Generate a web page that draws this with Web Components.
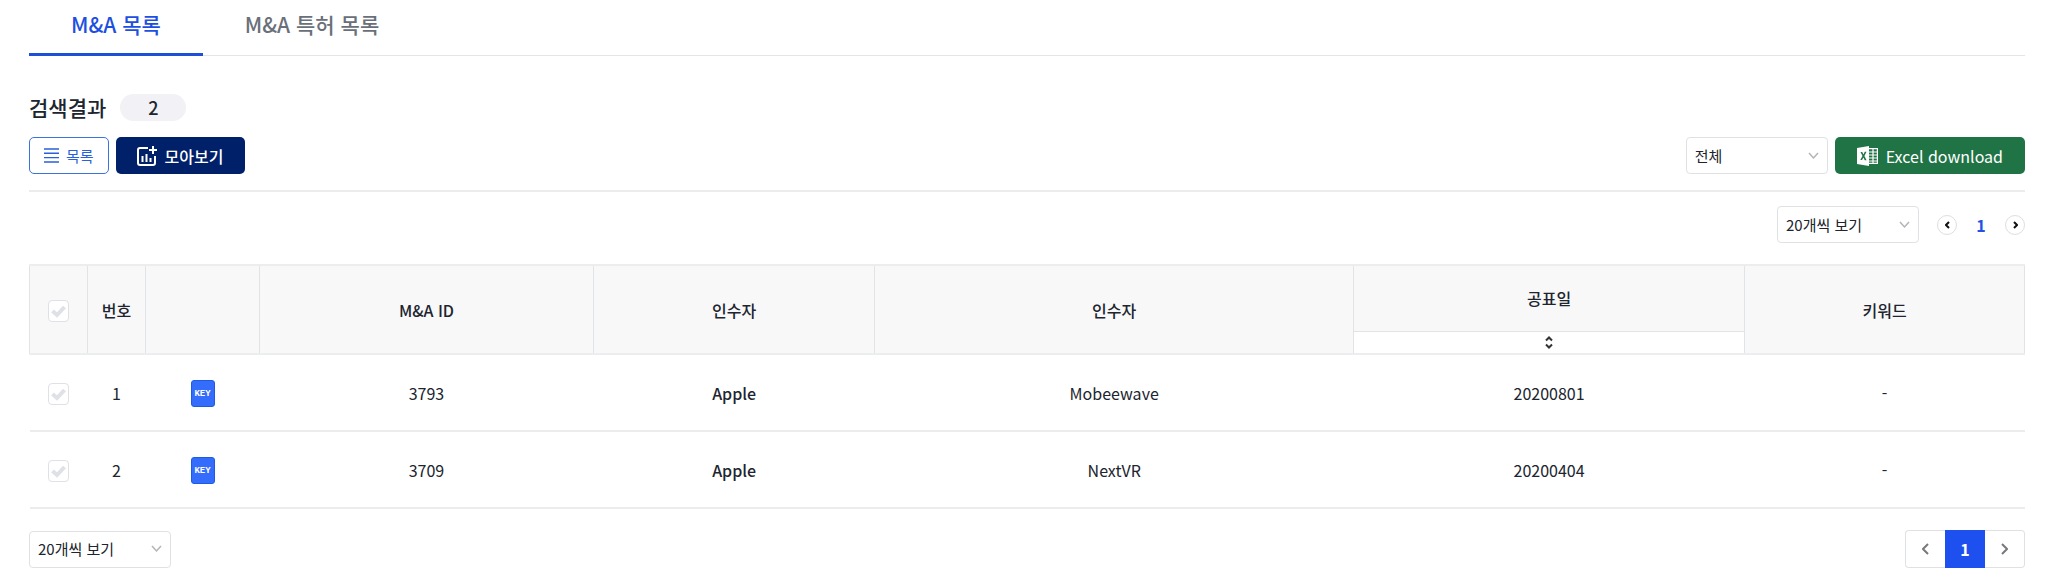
<!DOCTYPE html>
<html lang="ko">
<head>
<meta charset="utf-8">
<meta name="viewport" content="width=device-width, initial-scale=1">
<title>M&amp;A 목록</title>
<style>
  body { margin: 0; background: #fff; color: #20242e; font: 400 16px/24px "Noto Sans CJK KR", "Noto Sans", sans-serif; }
</style>
</head>
<body>
<ma-page>
  <ma-tabs>
    <ma-tab current>M&amp;A 목록</ma-tab>
    <ma-tab>M&amp;A 특허 목록</ma-tab>
  </ma-tabs>
  <result-count value="2">검색결과</result-count>
  <tool-bar>
    <tool-button kind="outline">
      <svg slot="icon" width="15" height="15" viewBox="0 0 15 15" stroke="currentColor" stroke-width="1.400"><path d="M0 1h15M0 5.300h15M0 9.600h15M0 14h15"/></svg>
      목록
    </tool-button>
    <tool-button kind="navy">
      <svg slot="icon" width="20" height="20" viewBox="0 0 20 20" fill="none" stroke="currentColor" stroke-width="2"><path d="M11 2H3Q1 2 1 4v13q0 2 2 2h13q2 0 2-2V10"/><path d="M16 0v8M12 4h8M5.500 10v6M9.500 8v8M13.500 12v4"/></svg>
      모아보기
    </tool-button>
    <drop-down slot="end" name="분류" options="전체"></drop-down>
    <tool-button slot="end" kind="green">
      <svg slot="icon" width="21" height="20" viewBox="0 0 21 20"><path fill="#fff" fill-rule="evenodd" d="M0 2 12 0v20L0 18zM3.500 6l2 4-2.200 4h1.700L6.400 11.400 7.800 14.200h1.800L7.400 10l2.100-4.200H7.800L6.500 8.500 5.200 6z"/><path fill="none" stroke="#fff" stroke-width="1.200" d="M12 2.600h8.400v14.800H12M12 6h8M12 9h8M12 12h8M12 15h8M16 3v14"/></svg>
      Excel download
    </tool-button>
  </tool-bar>
  <list-bar>
    <drop-down name="보기 개수" options="20개씩 보기"></drop-down>
    <page-nav kind="round"></page-nav>
  </list-bar>
  <result-table></result-table>
  <list-bar kind="bottom">
    <drop-down name="하단 보기 개수" options="20개씩 보기"></drop-down>
    <page-nav kind="joined"></page-nav>
  </list-bar>
</ma-page>

<script>
class Base extends HTMLElement {
  connectedCallback() {
    if (this.shadowRoot) return;
    this.attachShadow({ mode: 'open' }).innerHTML =
      '<style>*{box-sizing:border-box}button,select{font:inherit;color:inherit;margin:0;cursor:pointer}' + this.css() + '</style>' + this.html();
  }
}

customElements.define('ma-page', class extends Base {
  css() { return ':host{display:block;padding:0 23px 14px 29px}'; }
  html() { return '<main><slot></slot></main>'; }
});

customElements.define('ma-tabs', class extends Base {
  css() { return ':host{display:block}nav{display:flex;height:56px;box-shadow:inset 0 -1px #e4e5e8}'; }
  html() { return '<nav><slot></slot></nav>'; }
});

customElements.define('ma-tab', class extends Base {
  css() {
    return `:host{display:block}
    a{display:block;height:56px;padding:8px 42px 0;font-size:21px;line-height:32px;font-weight:500;color:#69707a;text-decoration:none;border-bottom:3px solid transparent}
    a[aria-current]{color:#1d4fe0;border-color:#1d4fd8}`;
  }
  html() { return `<a href="#"${this.hasAttribute('current') ? ' aria-current="page"' : ''}><slot></slot></a>`; }
});

customElements.define('result-count', class extends Base {
  css() {
    return `:host{display:flex;align-items:center;gap:14px;margin-top:38px;height:27px}
    h2{margin:0;font-size:21px;line-height:27px;font-weight:500}
    output{width:66px;height:27px;border-radius:14px;background:#f1f1f6;text-align:center;font-size:18px;line-height:27px;font-weight:500}`;
  }
  html() { return `<h2><slot></slot></h2><output>${this.getAttribute('value')}</output>`; }
});

customElements.define('tool-bar', class extends Base {
  css() {
    return `:host{display:flex;justify-content:space-between;margin-top:16px;padding-bottom:16px;border-bottom:2px solid #ebecee}
    div{display:flex;gap:7px}`;
  }
  html() { return '<div><slot></slot></div><div><slot name="end"></slot></div>'; }
});

customElements.define('tool-button', class extends Base {
  css() {
    return `:host{display:block}
    button{display:flex;align-items:center;justify-content:center;gap:8px;height:37px;border:0;border-radius:5px;padding:0 21px;font-size:16px;line-height:24px;color:#fff;white-space:nowrap}
    .outline{gap:7px;padding:0 14px;border:1px solid #3b73dc;background:#fff;color:#2a5fdb;font-size:15px}
    .navy{background:#00206a;font-weight:500}
    .green{background:#1f7345;padding:0 22px}`;
  }
  html() { return `<button type="button" class="${this.getAttribute('kind')}"><slot name="icon"></slot><span><slot></slot></span></button>`; }
});

customElements.define('drop-down', class extends Base {
  css() {
    return `:host{display:grid;width:142px;height:37px;font-size:15px}
    select,svg{grid-area:1/1}
    select{appearance:none;width:100%;height:100%;border:1px solid #dfe1e4;border-radius:4px;background:#fff;padding:0 32px 0 8px}
    svg{place-self:center end;margin-right:9px;pointer-events:none}`;
  }
  html() {
    return `<select aria-label="${this.getAttribute('name')}">${this.getAttribute('options').split('|').map(o => `<option>${o}</option>`).join('')}</select>
    <svg width="11" height="8" viewBox="0 0 11 8" fill="none" stroke="#b3b4b6" stroke-width="1.500"><path d="M1 1l4.500 5L10 1"/></svg>`;
  }
});

customElements.define('list-bar', class extends Base {
  css() {
    return `:host{display:flex;justify-content:flex-end;align-items:center;gap:18px;padding:14px 0 21px}
    :host([kind=bottom]){justify-content:space-between;padding:21px 0 0}`;
  }
  html() { return '<slot></slot>'; }
});

customElements.define('page-nav', class extends Base {
  css() {
    return `:host{display:block}
    nav{display:flex;align-items:center}
    button{display:grid;place-items:center;padding:0;background:#fff}
    a{display:block;text-align:center;text-decoration:none;font-weight:700}
    .round{gap:14px}
    .round button{width:20px;height:20px;border:1px solid #dcdee1;border-radius:50%;color:#111}
    .round a{width:20px;color:#2550e4}
    .joined button{width:40px;height:38px;border:1px solid #dfe1e4;color:#77797d}
    .joined button:first-child{border-radius:4px 0 0 4px;border-right:0}
    .joined button:last-child{border-radius:0 4px 4px 0;border-left:0}
    .joined a{width:40px;height:38px;line-height:38px;background:#1d50ee;color:#fff}`;
  }
  html() {
    const kind = this.getAttribute('kind');
    const [w, h] = kind === 'round' ? [5, 8] : [7, 12];
    const icon = d => `<svg width="${w}" height="${h}" viewBox="0 0 ${w} ${h}" fill="none" stroke="currentColor" stroke-width="2"><path d="${d}"/></svg>`;
    return `<nav class="${kind}" aria-label="페이지">
      <button type="button" aria-label="이전">${icon(`M${w - 1} 1L1 ${h / 2}L${w - 1} ${h - 1}`)}</button>
      <a href="#" aria-current="page">1</a>
      <button type="button" aria-label="다음">${icon(`M1 1L${w - 1} ${h / 2}L1 ${h - 1}`)}</button></nav>`;
  }
});

customElements.define('check-box', class extends Base {
  css() {
    return `:host{display:inline-grid;vertical-align:middle;width:21px;height:22px}
    input,svg{grid-area:1/1}
    input{appearance:none;margin:0;border:1px solid #dfe1e7;border-radius:4px;background:#fff}
    svg{place-self:center;pointer-events:none}`;
  }
  html() {
    return `<input type="checkbox" aria-label="${this.getAttribute('name')}">
    <svg width="15" height="13" viewBox="0 0 15 13" fill="none" stroke="#dfe1e6" stroke-width="4"><path d="M1.500 6l4.500 4L13.500 2"/></svg>`;
  }
});

customElements.define('key-badge', class extends Base {
  css() {
    return `:host{display:inline-block;vertical-align:middle}
    button{display:block;width:24px;height:27px;padding:0;border:1px solid #1f5be0;border-radius:3px;background:#346dfb;color:#fff;font:700 9px/26px "Liberation Mono",monospace}`;
  }
  html() { return '<button type="button">KEY</button>'; }
});

customElements.define('result-table', class extends Base {
  css() {
    return `:host{display:block}
    table{width:100%;table-layout:fixed;border-collapse:collapse;text-align:center}
    th,td{padding:0}
    th{height:66px;background:#f8f8f9;border:1px solid #e1e4e7;font-weight:500}
    thead{border-top:2px solid #ebedef;border-bottom:2px solid #ebedef}
    td{height:77px;border-bottom:2px solid #ebecee}
    th.sort{height:23px;background:#fff}
    th button{display:grid;place-items:center;width:100%;height:21px;border:0;padding:0;background:none}
    .xs{width:58px}.sm{width:114px}
    .id{width:334px}.buyer{width:14.1%}.target{width:24%}.date{width:19.6%}
    strong{font-weight:500}`;
  }
  html() {
    const rows = [
      ['3793', 'Apple', 'Mobeewave', '20200801', '-'],
      ['3709', 'Apple', 'NextVR', '20200404', '-']
    ];
    return `<table>
      <colgroup><col class="xs"><col class="xs"><col class="sm"><col class="id"><col class="buyer"><col class="target"><col class="date"><col></colgroup>
      <thead><tr>
        <th rowspan="2"><check-box name="전체 선택"></check-box></th>
        <th rowspan="2">번호</th><th rowspan="2"></th><th rowspan="2">M&amp;A ID</th>
        <th rowspan="2">인수자</th><th rowspan="2">인수자</th><th>공표일</th><th rowspan="2">키워드</th>
      </tr><tr><th class="sort"><button type="button" aria-label="공표일 정렬"><svg width="8" height="13" viewBox="0 0 8 13" fill="none" stroke="#333" stroke-width="2"><path d="M1 4.500l3-3 3 3M1 8.500l3 3 3-3"/></svg></button></th></tr></thead>
      <tbody>${rows.map((r, i) => `<tr>
        <td><check-box name="${i + 1}번 선택"></check-box></td><td>${i + 1}</td><td><key-badge></key-badge></td>
        <td>${r[0]}</td><td><strong>${r[1]}</strong></td><td>${r[2]}</td><td>${r[3]}</td><td>${r[4]}</td></tr>`).join('')}</tbody>
    </table>`;
  }
});
</script>
</body>
</html>
